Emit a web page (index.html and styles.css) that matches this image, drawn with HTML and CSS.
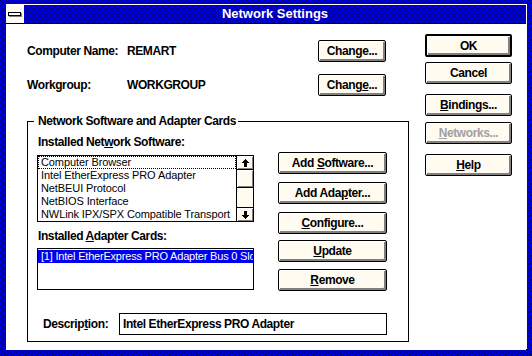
FILE: index.html
```html
<!DOCTYPE html>
<html>
<head>
<meta charset="utf-8">
<title>Network Settings</title>
<link rel="stylesheet" href="styles.css">
</head>
<body>
<div class="frame">
  <div class="titlebar">
    <div class="sysmenu"><span class="sysbar"></span></div>
    <div class="title">Network Settings</div>
  </div>
  <div class="client">
    <div class="main">
      <div class="row">
        <span class="lbl">Computer Name:</span>
        <span class="val">REMART</span>
        <button class="btn btn-change">Chan<u>g</u>e...</button>
      </div>
      <div class="row row-second">
        <span class="lbl">Workgroup:</span>
        <span class="val">WORKGROUP</span>
        <button class="btn btn-change">Chang<u>e</u>...</button>
      </div>
      <fieldset class="group">
        <legend>Network Software and Adapter Cards</legend>
        <div class="group-grid">
          <div class="lists">
            <div class="cap">Installed Net<u>w</u>ork Software:</div>
            <div class="listbox lb-soft">
              <ul class="items">
                <li class="focus">Computer Browser</li>
                <li>Intel EtherExpress PRO Adapter</li>
                <li>NetBEUI Protocol</li>
                <li>NetBIOS Interface</li>
                <li>NWLink IPX/SPX Compatible Transport</li>
              </ul>
              <div class="scrollbar">
                <div class="sb-btn sb-up">
                  <svg width="7" height="8" viewBox="0 0 7 8" shape-rendering="crispEdges"><rect x="3" y="0" width="1" height="1"/><rect x="2" y="1" width="3" height="1"/><rect x="1" y="2" width="5" height="1"/><rect x="0" y="3" width="7" height="1"/><rect x="2" y="4" width="3" height="4"/></svg>
                </div>
                <div class="sb-thumb"></div>
                <div class="sb-track"></div>
                <div class="sb-btn sb-down">
                  <svg width="7" height="8" viewBox="0 0 7 8" shape-rendering="crispEdges"><rect x="2" y="0" width="3" height="4"/><rect x="0" y="4" width="7" height="1"/><rect x="1" y="5" width="5" height="1"/><rect x="2" y="6" width="3" height="1"/><rect x="3" y="7" width="1" height="1"/></svg>
                </div>
              </div>
            </div>
            <div class="cap cap-adapter">Installed <u>A</u>dapter Cards:</div>
            <div class="listbox lb-adapter">
              <ul class="items">
                <li class="sel">[1] Intel EtherExpress PRO Adapter Bus 0 Slot 0</li>
              </ul>
            </div>
          </div>
          <div class="actions">
            <button class="btn">Add <u>S</u>oftware...</button>
            <button class="btn">Add Ada<u>p</u>ter...</button>
            <button class="btn"><u>C</u>onfigure...</button>
            <button class="btn"><u>U</u>pdate</button>
            <button class="btn"><u>R</u>emove</button>
          </div>
        </div>
        <div class="desc-row">
          <span class="desc-lbl">Descrip<u>t</u>ion:</span>
          <div class="desc-box">Intel EtherExpress PRO Adapter</div>
        </div>
      </fieldset>
    </div>
    <div class="side">
      <button class="btn btn-default">OK</button>
      <button class="btn btn-cancel">Cancel</button>
      <button class="btn btn-bind"><u>B</u>indings...</button>
      <button class="btn btn-net" disabled><u>N</u>etworks...</button>
      <button class="btn btn-help"><u>H</u>elp</button>
    </div>
  </div>
</div>
</body>
</html>
```

FILE: styles.css
```css
* { box-sizing: border-box; }

html, body {
  margin: 0;
  padding: 0;
}

body {
  width: 532px;
  height: 356px;
  overflow: hidden;
  background-color: #0000f4;
  background-image:
    radial-gradient(circle at 0.5px 0.5px, #000070 0.6px, transparent 0.9px),
    radial-gradient(circle at 2px 2px, #000070 0.6px, transparent 0.9px);
  background-size: 3px 3px, 3px 3px;
  font-family: "Liberation Sans", Arial, sans-serif;
  font-size: 12px;
  font-weight: bold;
  letter-spacing: -0.4px;
  color: #000;
}

.frame {
  margin: 4px 5px 7px 6px;
  height: 345px;
  border-top: 1px solid #fff;
  border-right: 1px solid #fff;
  display: flex;
  flex-direction: column;
}

.titlebar {
  height: 19px;
  border-bottom: 1px solid #000;
  display: flex;
}

.sysmenu {
  width: 18px;
  background: #fffbf0;
}

.sysbar {
  display: block;
  width: 13px;
  height: 4px;
  margin: 7px 0 0 2px;
  border: 1px solid #000;
  background: #fff;
  box-shadow: 1px 1px 0 #808080;
}

.title {
  flex: 1;
  text-align: center;
  color: #fff;
  font-size: 13px;
  line-height: 18px;
  letter-spacing: 0;
}

.client {
  flex: 1;
  background: #fff;
  display: flex;
  padding: 0 14px 8px 21px;
}

.main {
  width: 382px;
  padding-top: 16px;
}

.row {
  display: flex;
  align-items: center;
  height: 22px;
  width: 359px;
}

.row-second { margin-top: 12px; }

.lbl { width: 100px; }
.val { flex: 1; }

u { text-decoration: underline; text-underline-offset: 1px; }

.btn {
  display: block;
  height: 22px;
  padding: 0;
  margin: 0;
  border: 1px solid #000;
  border-radius: 2px;
  background: #fffbf0;
  box-shadow: inset 1px 1px 0 #fff, inset -1px -1px 0 #808080, inset -2px -2px 0 #808080;
  font-family: inherit;
  font-size: 12px;
  font-weight: bold;
  letter-spacing: -0.4px;
  color: #000;
  text-align: center;
  line-height: 18px;
}

.btn-change { width: 68px; }

.group {
  margin: 18px 0 0;
  padding: 7px 6px 6px 9px;
  border: 1px solid #000;
  width: 382px;
  min-width: 0;
}

.group legend {
  margin-left: -3px;
  padding: 0 2px 0 4px;
  line-height: 14px;
}

.group-grid {
  display: grid;
  grid-template-columns: 217px 109px;
  column-gap: 24px;
}

.cap {
  line-height: 14px;
  margin-left: 1px;
}

.cap-adapter { margin-top: 7px; }

.listbox {
  border: 1px solid #000;
  display: flex;
  background: #fff;
  width: 217px;
}

.lb-soft { margin-top: 6px; height: 67px; }
.lb-adapter { margin-top: 5px; height: 42px; }

.items {
  flex: 1;
  min-width: 0;
  margin: 0;
  padding: 0;
  list-style: none;
  overflow: hidden;
  font-weight: normal;
  font-size: 11px;
  letter-spacing: -0.1px;
}

.items li {
  height: 13px;
  line-height: 13px;
  padding-left: 3px;
  white-space: nowrap;
  overflow: hidden;
}

.items li.focus {
  outline: 1px dotted #000;
  outline-offset: -1px;
}

.items li.sel {
  background: #0000f0;
  color: #fff;
  letter-spacing: -0.2px;
  margin-top: 1px;
}

.scrollbar {
  width: 17px;
  border-left: 1px solid #000;
  display: flex;
  flex-direction: column;
  background: #fffbf0;
}

.sb-btn {
  height: 14px;
  display: flex;
  align-items: center;
  justify-content: center;
  background: #fffbf0;
  box-shadow: inset 1px 1px 0 #fff, inset -1px -1px 0 #808080;
}

.sb-up { border-bottom: 1px solid #000; }
.sb-down { border-top: 1px solid #000; }

.sb-thumb {
  height: 18px;
  border-bottom: 1px solid #000;
  background: #fffbf0;
  box-shadow: inset 1px 1px 0 #fff, inset -1px -1px 0 #808080;
}

.sb-track {
  flex: 1;
  background: #fffbf0;
}

.actions {
  padding-top: 17px;
}

.actions .btn { width: 109px; }
.actions .btn:nth-child(2),
.actions .btn:nth-child(3) { margin-top: 8px; }
.actions .btn:nth-child(4) { margin-top: 6px; }
.actions .btn:nth-child(5) { margin-top: 7px; }

.desc-row {
  display: flex;
  align-items: center;
  margin-top: 22px;
}

.desc-lbl {
  width: 76px;
  margin-left: 6px;
}

.desc-box {
  width: 268px;
  height: 22px;
  border: 1px solid #000;
  padding-left: 3px;
  line-height: 20px;
}

.side {
  width: 87px;
  margin-left: 16px;
  padding-top: 10px;
}

.side .btn { width: 87px; }

.btn-default {
  height: 23px;
  border-width: 2px;
  line-height: 18px;
}

.btn-cancel { margin-top: 5px; }
.btn-bind { margin-top: 10px; }
.btn-net { margin-top: 6px; color: #a0a0a0; }
.btn-help { margin-top: 10px; }
```
